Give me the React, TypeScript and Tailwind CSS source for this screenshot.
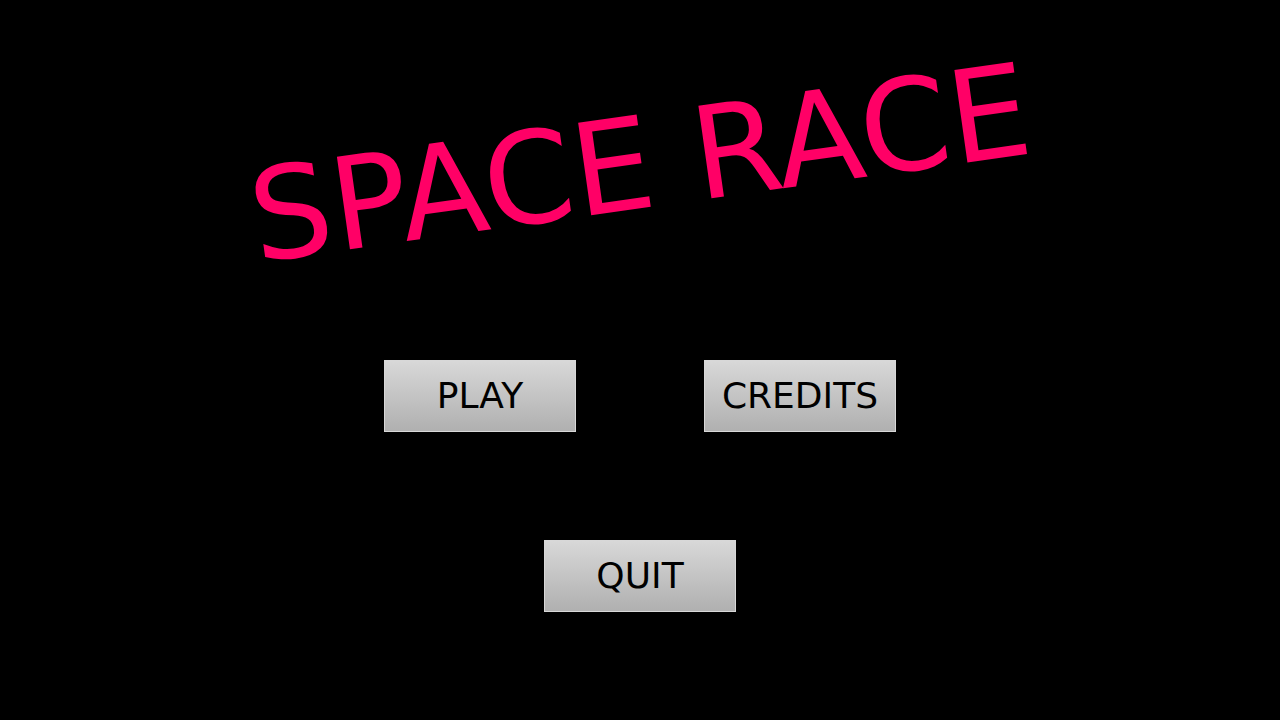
import clsx from 'clsx';

type MenuButtonProps = {
  label: string;
  onClick?: () => void;
};

const MENU_ROWS = [['PLAY', 'CREDITS'], ['QUIT']];

const MenuButton: React.FC<MenuButtonProps> = ({ label, onClick }) => {
  return (
    <button
      type="button"
      onClick={onClick}
      className={clsx(
        'flex h-18 w-48 items-center justify-center border border-[#d8d8d8]',
        'bg-linear-to-b from-[#d8d8d8] to-[#b0b0b0] text-4xl leading-none text-black',
        'hover:from-[#e4e4e4] hover:to-[#c0c0c0]',
      )}
    >
      {label}
    </button>
  );
};

const App: React.FC = () => {
  return (
    <main className="flex min-h-screen flex-col items-center overflow-hidden bg-black pt-25 pb-25 font-['DejaVu_Sans',sans-serif]">
      <h1 className="-rotate-8 text-9xl leading-none whitespace-nowrap text-[#ff0066]">
        SPACE RACE
      </h1>
      <nav className="mt-33 flex flex-col items-center gap-27">
        {MENU_ROWS.map((row, index) => (
          <div key={index} className="flex justify-center gap-32">
            {row.map((label) => (
              <MenuButton key={label} label={label} />
            ))}
          </div>
        ))}
      </nav>
    </main>
  );
};

export default App;
